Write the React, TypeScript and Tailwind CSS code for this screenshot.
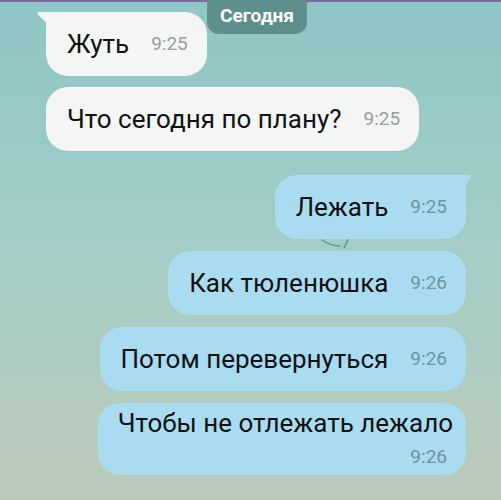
import React from "react";

type Msg = { text: string; time: string; out: boolean; tail?: boolean; wrap?: boolean };

const messages: Msg[] = [
  { text: "Жуть", time: "9:25", out: false, tail: true },
  { text: "Что сегодня по плану?", time: "9:25", out: false },
  { text: "Лежать", time: "9:25", out: true, tail: true },
  { text: "Как тюленюшка", time: "9:26", out: true },
  { text: "Потом перевернуться", time: "9:26", out: true },
  { text: "Чтобы не отлежать лежало", time: "9:26", out: true, wrap: true },
];

function Bubble({ m }: { m: Msg }) {
  const bg = m.out ? "bg-[#a9dcf1]" : "bg-[#f4f6f6]";
  const timeColor = m.out ? "text-[#6f929c]" : "text-[#9a9c9c]";
  return (
    <div className={m.out ? "flex justify-end pr-[35px]" : "flex justify-start pl-[46px]"}>
      <div className={`relative rounded-[22px] ${bg} ${m.tail ? (m.out ? "rounded-tr-none" : "rounded-tl-none") : ""}`}>
        {m.tail && !m.out && (
          <svg className="absolute -left-[9px] top-0" width="12" height="14" viewBox="0 0 12 14">
            <path d="M12 0 H2 C0 0 0 2 2 4 C6 7 9 10 12 14 Z" fill="#f4f6f6" />
          </svg>
        )}
        {m.tail && m.out && (
          <svg className="absolute -right-[5px] top-0" width="8" height="14" viewBox="0 0 8 14">
            <path d="M0 0 H6 C8 0 8 2 7 4 C5 7 3 10 0 14 Z" fill="#a9dcf1" />
          </svg>
        )}
        {m.wrap ? (
          <div className="flex flex-col pl-[20px] pr-[13px] pt-[4px] pb-[6px]">
            <span className="text-[26px] leading-[32px] text-[#111]">{m.text}</span>
            <span className={`self-end mt-[6px] mr-[6px] text-[19px] leading-[24px] ${timeColor}`}>{m.time}</span>
          </div>
        ) : (
          <div className="flex items-center h-[64px] pl-[21px] pr-[19px] gap-[22px]">
            <span className="text-[26px] text-[#111]">{m.text}</span>
            <span className={`text-[19px] ${timeColor}`}>{m.time}</span>
          </div>
        )}
      </div>
    </div>
  );
}

export default function App() {
  return (
    <div
      className="relative w-[501px] h-[500px] overflow-hidden bg-gradient-to-b from-[#8ec6c6] via-[#a3cdc6] to-[#bccab9]"
      style={{ fontFamily: "Roboto, 'Noto Sans', sans-serif" }}
    >
      <div className="h-[2px] bg-[#7b6aa6]" />
      {/* wallpaper doodle peeking out under a bubble */}
      <svg className="absolute left-[320px] top-[238px]" width="30" height="14" viewBox="0 0 30 14">
        <path d="M2 2 C8 6 14 8 20 8 M24 10 L28 2" stroke="#4f9a96" strokeWidth="1.5" fill="none" strokeLinecap="round" />
      </svg>
      <div className="absolute left-[207px] top-0 w-[100px] h-[34px] rounded-b-[12px] bg-[#5f8f8b] flex items-center justify-center z-10">
        <span className="text-white font-bold text-[19px] -mt-[1px]">Сегодня</span>
      </div>
      <div className="relative flex flex-col pt-[10px]">
        <div className="flex flex-col gap-[11px]">
          <Bubble m={messages[0]} />
          <Bubble m={messages[1]} />
        </div>
        <div className="flex flex-col gap-[12px] mt-[24px]">
          {messages.slice(2).map((m, i) => (
            <Bubble key={i} m={m} />
          ))}
        </div>
      </div>
    </div>
  );
}
